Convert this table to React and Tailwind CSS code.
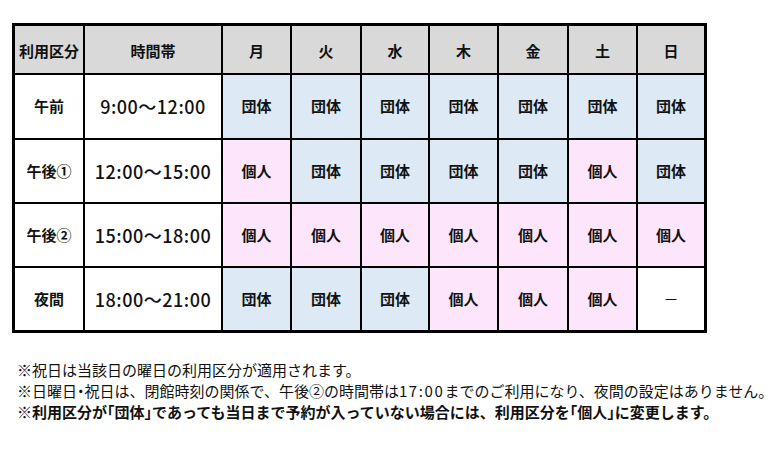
const days = ["月", "火", "水", "木", "金", "土", "日"];

const rows = [
  { label: "午前", time: "9:00～12:00", cells: ["団体", "団体", "団体", "団体", "団体", "団体", "団体"] },
  { label: "午後①", time: "12:00～15:00", cells: ["個人", "団体", "団体", "団体", "団体", "個人", "団体"] },
  { label: "午後②", time: "15:00～18:00", cells: ["個人", "個人", "個人", "個人", "個人", "個人", "個人"] },
  { label: "夜間", time: "18:00～21:00", cells: ["団体", "団体", "団体", "個人", "個人", "個人", "－"] },
];

const cellBg = {
  団体: "bg-[#ddeaf6]",
  個人: "bg-[#fde6fb]",
  "－": "bg-white",
};

const font = { fontFamily: '"Noto Sans CJK JP", "Noto Sans", sans-serif' };

// half-width punctuation, as in the reference notes
function H({ children }) {
  return <span className="[font-feature-settings:'halt']">{children}</span>;
}

export default function App() {
  return (
    <div className="w-[777px] h-[454px] bg-white text-[#111]" style={font}>
      <div className="pt-[23px] pl-[12px]">
        <div className="inline-grid grid-cols-[68px_136px_67px_68px_66px_67px_68px_67px_66px] grid-rows-[47px_63px_62px_62px_62px] gap-[2px] bg-black border-[3px] border-black">
          <div className="bg-[#d9d9d9] flex items-center justify-center text-[15px] font-bold pt-[4px]">
            利用区分
          </div>
          <div className="bg-[#d9d9d9] flex items-center justify-center text-[15px] font-bold pt-[4px]">
            時間帯
          </div>
          {days.map((d) => (
            <div
              key={d}
              className="bg-[#d9d9d9] flex items-center justify-center text-[15px] font-bold pt-[4px]"
            >
              {d}
            </div>
          ))}
          {rows.map((r) => (
            <>
              <div
                key={r.label}
                className="bg-white flex items-center justify-center text-[15px] font-bold"
              >
                {r.label}
              </div>
              <div className="bg-white flex items-center justify-center text-[18px] font-medium tracking-[0.5px]">
                {r.time}
              </div>
              {r.cells.map((c, i) => (
                <div
                  key={r.label + i}
                  className={`${cellBg[c]} flex items-center justify-center text-[15px] ${
                    c === "－" ? "font-normal" : "font-bold"
                  }`}
                >
                  {c}
                </div>
              ))}
            </>
          ))}
        </div>
      </div>
      <div className="pl-[17px] pt-[26px] text-[15px] leading-[21px] whitespace-nowrap">
        <p>※祝日は当該日の曜日の利用区分が適用されます。</p>
        <p>
          ※日曜日<H>・</H>祝日は、閉館時刻の関係で、午後②の時間帯は
          <span className="tracking-[1.6px]">17:00</span>
          までのご利用になり、夜間の設定はありません。
        </p>
        <p className="font-bold">
          ※利用区分が<H>「</H>団体<H>」</H>であっても当日まで予約が入っていない場合には、利用区分を<H>「</H>個人<H>」</H>に変更します。
        </p>
      </div>
    </div>
  );
}
